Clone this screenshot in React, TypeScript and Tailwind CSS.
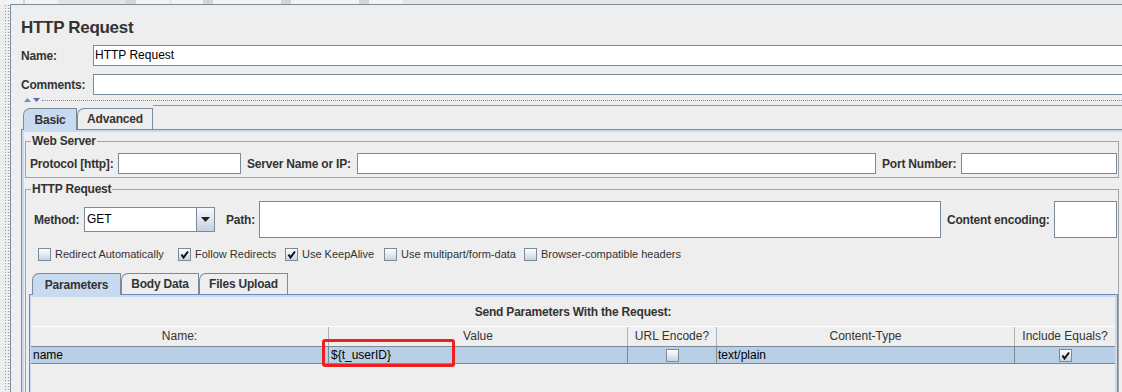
import React from 'react';

const Check = ({ checked }: { checked?: boolean }) => (
  <span className="w-[13px] h-[13px] shrink-0 border border-[#7a8a99] bg-gradient-to-b from-[#ffffff] to-[#c6d4e2] flex items-center justify-center">
    {checked && (
      <svg width="9" height="9" viewBox="0 0 9 9">
        <path d="M1.5 4.5 L3.5 7.5 L8 1.5" stroke="#111" strokeWidth="2" fill="none" />
      </svg>
    )}
  </span>
);

const Tab = ({ label, active, w }: { label: string; active?: boolean; w: string }) => (
  <div
    className={`${w} ${active ? 'h-[22px] -mb-px bg-[#c8daef] relative z-10' : 'h-[21px] bg-[#eeeeee]'} shrink-0 border border-b-0 border-[#7a8a99] rounded-tl-[7px] flex items-center justify-center text-[12px] font-bold tracking-[-0.2px]`}
  >
    {label}
  </div>
);

const Input = ({ w, h = 'h-[21px]', children }: { w: string; h?: string; children?: React.ReactNode }) => (
  <div className={`${w} ${h} shrink-0 border border-[#7a8a99] bg-white text-[12px] font-normal tracking-normal text-black leading-[19px] pl-[1px]`}>
    {children}
  </div>
);

const Opt = ({ label, checked, w }: { label: string; checked?: boolean; w: string }) => (
  <div className={`${w} shrink-0 flex items-center gap-[4px]`}>
    <Check checked={checked} />
    <span className="text-[11px] whitespace-nowrap">{label}</span>
  </div>
);

export default function App() {
  return (
    <div className="relative w-[1122px] h-[392px] overflow-hidden bg-[#eeeeee] text-[#333333] font-['Liberation_Sans',Arial,sans-serif] flex flex-col">
      {/* bottom of the toolbar above, cut off */}
      <div className="h-[4px] shrink-0 flex bg-[#d5d5d5]">
        <div className="w-[23px] bg-[#f3f3f3]" />
        <div className="w-[2px]" />
        <div className="w-[33px] bg-[#f3f3f3]" />
        <div className="w-[67px] bg-[#e4e4e4]" />
        <div className="w-[11px]" />
        <div className="w-[34px] bg-[#f3f3f3]" />
        <div className="w-[33px] bg-[#f3f3f3] border-l border-[#dddddd]" />
        <div className="w-[10px]" />
        <div className="w-[68px] bg-[#f3f3f3]" />
        <div className="w-[10px]" />
        <div className="w-[68px] bg-[#f3f3f3]" />
        <div className="w-[10px]" />
        <div className="w-[34px] bg-[#f3f3f3]" />
        <div className="flex-1 bg-[#e6e6e6]" />
      </div>

      <div className="flex flex-1 min-h-0">
        {/* split pane divider */}
        <div className="w-[10px] shrink-0 flex">
          <div className="ml-[4px] w-[5px] bg-[radial-gradient(circle,#8797a8_0.6px,transparent_0.7px)] bg-[length:3px_3px]" />
        </div>

        <div className="flex-1 min-w-0 overflow-hidden border-l border-t border-[#7a8a99] pt-[13px] pl-[10px]">
          <div className="h-[20px] leading-[20px] text-[17px] font-bold tracking-[-0.3px]">HTTP Request</div>

          <div className="mt-[7px] flex items-center h-[21px] text-[12px] font-bold tracking-[-0.2px]">
            <div className="w-[72px] shrink-0">Name:</div>
            <Input w="w-[1040px]">HTTP Request</Input>
          </div>
          <div className="mt-[8px] flex items-center h-[21px] text-[12px] font-bold tracking-[-0.2px]">
            <div className="w-[72px] shrink-0">Comments:</div>
            <Input w="w-[1040px]" />
          </div>

          {/* collapse handle */}
          <div className="h-[10px] flex items-center">
            <svg width="18" height="6" viewBox="0 0 18 6" className="ml-[3px] shrink-0">
              <polygon points="0,5 3.5,1 7,5" fill="#6d8fc4" />
              <polygon points="9,1 16,1 12.5,5" fill="#4a6fb0" />
            </svg>
            <div className="flex-1 border-t border-dotted border-[#7b8fa8]" />
          </div>

          <div className="h-[24px] flex items-end">
            <div className="ml-[2px] flex">
              <Tab label="Basic" active w="w-[54px]" />
              <Tab label="Advanced" w="w-[76px]" />
            </div>
            <div className="flex-1 self-start border-t border-[#8a98a8]" />
          </div>

          <div className="w-[1110px] border-t border-l border-[#6d8ac0]">
            <div className="border-t-2 border-l-2 border-[#c8daef] pt-[2px] pl-px">
              <fieldset className="w-[1094px] border border-[#a3a3a3] pb-[3px]">
                <legend className="ml-[5px] px-px text-[12px] font-bold leading-[14px] tracking-[-0.2px]">Web Server</legend>
                <div className="mt-[5px] h-[21px] flex items-center pl-[4px] text-[12px] font-bold tracking-[-0.2px]">
                  <div className="w-[88px] shrink-0">Protocol [http]:</div>
                  <Input w="w-[123px]" />
                  <div className="w-[116px] shrink-0 pl-[6px]">Server Name or IP:</div>
                  <Input w="w-[519px]" />
                  <div className="w-[85px] shrink-0 pl-[6px]">Port Number:</div>
                  <Input w="w-[156px]" />
                </div>
              </fieldset>

              <fieldset className="mt-[4px] w-[1094px] border border-[#a3a3a3]">
                <legend className="ml-[5px] px-px text-[12px] font-bold leading-[14px] tracking-[-0.2px]">HTTP Request</legend>
                <div className="mt-[5px] h-[37px] flex items-center pl-[8px] text-[12px] font-bold tracking-[-0.2px]">
                  <div className="w-[50px] shrink-0">Method:</div>
                  <div className="w-[131px] h-[25px] shrink-0 border border-[#7a8a99] bg-white flex">
                    <div className="flex-1 pl-[2px] text-[12px] font-normal tracking-normal text-black leading-[23px]">GET</div>
                    <div className="w-[18px] border-l border-[#7a8a99] bg-gradient-to-b from-[#f7f9fb] to-[#c5d2df] flex items-center justify-center">
                      <svg width="9" height="5" viewBox="0 0 9 5">
                        <polygon points="0,0 9,0 4.5,5" fill="#222" />
                      </svg>
                    </div>
                  </div>
                  <div className="w-[44px] shrink-0 pl-[11px]">Path:</div>
                  <Input w="w-[682px]" h="h-[37px]" />
                  <div className="w-[113px] shrink-0 pl-[6px]">Content encoding:</div>
                  <Input w="w-[63px]" h="h-[37px]" />
                </div>

                <div className="mt-[9px] h-[15px] flex items-center pl-[12px]">
                  <Opt label="Redirect Automatically" w="w-[140px]" />
                  <Opt label="Follow Redirects" checked w="w-[107px]" />
                  <Opt label="Use KeepAlive" checked w="w-[99px]" />
                  <Opt label="Use multipart/form-data" w="w-[140px]" />
                  <Opt label="Browser-compatible headers" w="w-[200px]" />
                </div>

                <div className="mt-[11px] ml-[3px] w-[1089px]">
                  <div className="ml-[3px] flex">
                    <Tab label="Parameters" active w="w-[89px]" />
                    <Tab label="Body Data" w="w-[78px]" />
                    <Tab label="Files Upload" w="w-[89px]" />
                  </div>
                  <div className="h-[110px] border-t border-l border-r border-[#6d8ac0]">
                    <div className="h-full border-t-2 border-l border-r-2 border-[#c8daef]">
                      <div className="h-[29px] flex items-center justify-center text-[12px] font-bold tracking-[-0.2px]">
                        Send Parameters With the Request:
                      </div>
                      <div className="h-[21px] flex border-t border-b border-t-white border-b-[#7a8a99] text-[12px] leading-[19px] text-center">
                        <div className="w-[298px] border-r border-[#b0b0b0]">Name:</div>
                        <div className="w-[299px] border-r border-[#b0b0b0]">Value</div>
                        <div className="w-[89px] border-r border-[#b0b0b0]">URL Encode?</div>
                        <div className="w-[298px] border-r border-[#b0b0b0]">Content-Type</div>
                        <div className="w-[100px]">Include Equals?</div>
                      </div>
                      <div className="h-[17px] flex bg-[#b8cfe5] border-b border-[#7a8a99] text-[12px] text-black leading-[16px]">
                        <div className="w-[298px] border-r border-[#7a8a99] pl-[2px]">name</div>
                        <div className="w-[299px] border-r border-[#7a8a99] pl-[2px]">{'${t_userID}'}</div>
                        <div className="w-[89px] border-r border-[#7a8a99] flex items-center justify-center">
                          <Check />
                        </div>
                        <div className="w-[298px] border-r border-[#7a8a99] pl-px">text/plain</div>
                        <div className="w-[100px] flex items-center justify-center">
                          <Check checked />
                        </div>
                      </div>
                    </div>
                  </div>
                </div>
              </fieldset>
            </div>
          </div>
        </div>
      </div>

      {/* annotation marking the value */}
      <div className="absolute left-[322px] top-[339px] w-[133px] h-[28px] border-[3px] border-[#f01e1e] rounded-[3px]" />
    </div>
  );
}
